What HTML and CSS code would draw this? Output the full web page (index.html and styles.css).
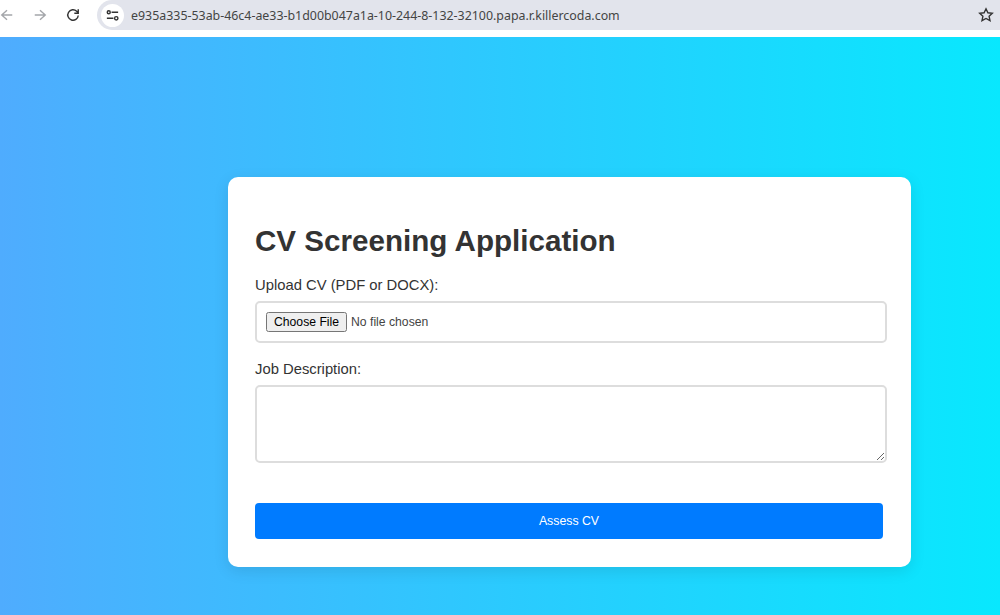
FILE: index.html
```html
<!DOCTYPE html>
<html lang="en">
<head>
<meta charset="utf-8">
<title>CV Screening Application</title>
<link rel="stylesheet" href="styles.css">
</head>
<body>
<header class="chrome">
  <div class="toolbar">
    <nav class="nav-icons">
      <svg class="nav-icon muted" viewBox="0 0 16 16"><path d="M14 8H2M8 2.5 2 8l6 5.5"/></svg>
      <svg class="nav-icon muted" viewBox="0 0 16 16"><path d="M2 8h12M8 2.5 14 8l-6 5.5"/></svg>
      <svg class="nav-icon" viewBox="0 0 16 16"><path d="M14 8.5a6 6 0 1 1-1.8-4.8L14 5.5M14 1.5v4.5H9.5"/></svg>
    </nav>
    <div class="omnibox">
      <span class="tune">
        <svg class="tune-icon" viewBox="0 0 16 16"><circle cx="4" cy="4.5" r="1.6"/><path d="M7 4.5h7M2 11h7"/><circle cx="12" cy="11" r="1.8"/></svg>
      </span>
      <span class="url">e935a335-53ab-46c4-ae33-b1d00b047a1a-10-244-8-132-32100.papa.r.killercoda.com</span>
      <svg class="star" viewBox="0 0 16 16"><path d="m8 1.8 1.9 4 4.4.5-3.2 3 .9 4.4L8 11.5l-4 2.2.9-4.4-3.2-3 4.4-.5z"/></svg>
    </div>
  </div>
</header>
<main class="page">
  <form class="card">
    <h1 class="title">CV Screening Application</h1>
    <label class="label" for="cv">Upload CV (PDF or DOCX):</label>
    <input class="field file-field" id="cv" type="file">
    <label class="label" for="jd">Job Description:</label>
    <textarea class="field text-field" id="jd"></textarea>
    <button class="submit" type="button">Assess CV</button>
  </form>
</main>
</body>
</html>
```
FILE: styles.css
```css
* { box-sizing: border-box; }
html, body { height: 100%; }
body {
  margin: 0;
  display: flex;
  flex-direction: column;
  overflow: hidden;
  font-family: "Liberation Sans", Arial, sans-serif;
  color: #333;
}
.chrome {
  height: 37px;
  flex: none;
  background: #fff;
  padding-bottom: 7px;
}
.toolbar {
  height: 30px;
  display: flex;
  align-items: center;
  background: #fff;
}
.nav-icons {
  width: 97px;
  flex: none;
  display: flex;
  align-items: center;
  gap: 19px;
}
.nav-icon {
  width: 14px;
  height: 14px;
  fill: none;
  stroke: #333;
  stroke-width: 1.6;
}
.nav-icon.muted { stroke: #a4a6aa; }
.omnibox {
  flex: 1;
  height: 30px;
  display: flex;
  align-items: center;
  padding-left: 4px;
  border-radius: 15px 0 0 15px;
  background: #e2e4ec;
}
.tune {
  width: 23px;
  height: 23px;
  flex: none;
  display: flex;
  align-items: center;
  justify-content: center;
  border-radius: 50%;
  background: #fff;
  margin-right: 7px;
}
.tune-icon {
  width: 15px;
  height: 15px;
  fill: none;
  stroke: #333;
  stroke-width: 1.5;
}
.url {
  flex: 1;
  font-family: "Noto Sans", "Liberation Sans", sans-serif;
  font-size: 12.4px;
  color: #444;
  white-space: nowrap;
}
.star {
  width: 16px;
  height: 16px;
  margin-right: 6px;
  fill: none;
  stroke: #333;
  stroke-width: 1.4;
}
.page {
  flex: 1;
  padding: 140px 89px 48px 228px;
  background: linear-gradient(90deg, #4facfe 0%, #08e8fe 100%);
}
.card {
  width: 683px;
  height: 390px;
  padding: 45px 28px 28px 27px;
  background: #fff;
  border-radius: 10px;
  box-shadow: 0 4px 15px rgba(0, 0, 0, 0.1);
}
.title {
  margin: 0 0 17px;
  font-size: 29.6px;
  line-height: 38px;
  font-weight: 700;
  color: #333;
}
.label {
  display: block;
  margin-bottom: 7px;
  font-size: 14.8px;
  line-height: 17px;
  color: #333;
}
.field {
  display: block;
  width: 632px;
  background: #fff;
  border: 2px solid #ddd;
  border-radius: 5px;
}
.file-field {
  height: 42px;
  padding: 9px;
  margin-bottom: 18px;
  font-size: 12.2px;
  color: #444;
}
.text-field {
  height: 78px;
  margin-bottom: 40px;
  padding: 8px;
}
.submit {
  display: block;
  width: 628px;
  height: 36px;
  border: 0;
  border-radius: 4px;
  background: #007bff;
  color: #fff;
  font-family: "Liberation Sans", Arial, sans-serif;
  font-size: 12.3px;
}
```
